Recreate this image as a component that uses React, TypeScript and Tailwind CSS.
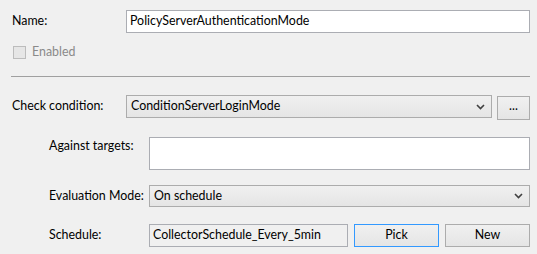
import React from 'react';

const font = { fontFamily: 'Lato, "Noto Sans", "Liberation Sans", sans-serif' };

const Chevron = () => (
  <svg width="9" height="6" viewBox="0 0 9 6" className="shrink-0">
    <path d="M1 1 L4.5 4.5 L8 1" fill="none" stroke="#404040" strokeWidth="1.6" />
  </svg>
);

const Combo = ({ value, className }: { value: string; className: string }) => (
  <div
    className={`flex items-center justify-between border border-[#acacac] bg-gradient-to-b from-[#f0f0f0] to-[#e5e5e5] pl-[4px] pr-[6px] text-[12.4px] text-black ${className}`}
  >
    <span>{value}</span>
    <Chevron />
  </div>
);

const Button = ({ label, className }: { label: string; className: string }) => (
  <div
    className={`flex items-center justify-center border bg-gradient-to-b from-[#f0f0f0] to-[#e5e5e5] text-[12.4px] text-black ${className}`}
  >
    {label}
  </div>
);

export default function App() {
  return (
    <div className="w-[537px] h-[254px] bg-[#f0f0f0] text-[12.4px] text-black" style={font}>
      <div className="pt-[10px] pl-[12px] pr-[7px]">
        {/* Name */}
        <div className="flex items-center h-[23px]">
          <span className="w-[114px]">Name:</span>
          <div className="flex-1 h-full border border-[#abadb3] bg-white pl-[3px] flex items-center">
            PolicyServerAuthenticationMode
          </div>
        </div>

        {/* Enabled */}
        <div className="flex items-center mt-[13px] ml-[1px] h-[13px]">
          <div className="w-[13px] h-[13px] border border-[#bcbcbc] bg-[#e6e6e6]" />
          <span className="ml-[6px] text-[#8a8a8a]">Enabled</span>
        </div>

        <div className="mt-[17px] -ml-[1px] h-px bg-[#a0a0a0]" />

        {/* Check condition */}
        <div className="flex items-start mt-[18px]">
          <span className="w-[114px] h-[23px] flex items-center">Check condition:</span>
          <Combo value="ConditionServerLoginMode" className="w-[366px] h-[23px]" />
          <Button label="..." className="ml-[5px] mt-[1px] w-[33px] h-[24px] border-[#acacac] pb-[4px]" />
        </div>

        {/* Against targets */}
        <div className="flex items-start mt-[17px] pl-[37px]">
          <span className="w-[100px] leading-[17px]">Against targets:</span>
          <div className="flex-1 h-[33px] border border-[#abadb3] bg-white" />
        </div>

        {/* Evaluation mode */}
        <div className="flex items-center mt-[15px] pl-[37px]">
          <span className="w-[100px]">Evaluation Mode:</span>
          <Combo value="On schedule" className="flex-1 h-[22px]" />
        </div>

        {/* Schedule */}
        <div className="flex items-center mt-[17px] pl-[37px]">
          <span className="w-[100px]">Schedule:</span>
          <div className="w-[199px] h-[23px] border border-[#abadb3] bg-[#f0f0f0] pl-[3px] flex items-center">
            CollectorSchedule_Every_5min
          </div>
          <Button label="Pick" className="ml-[6px] w-[85px] h-[23px] border-[#3399ff]" />
          <Button label="New" className="ml-[6px] w-[85px] h-[23px] border-[#acacac]" />
        </div>
      </div>
    </div>
  );
}
